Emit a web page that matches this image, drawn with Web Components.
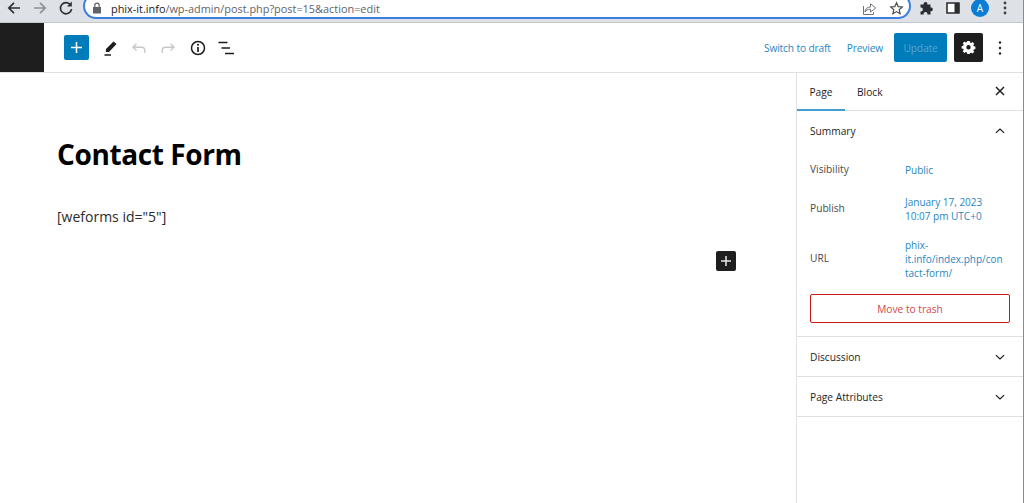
<!DOCTYPE html>
<html>
<head>
<meta charset="utf-8">
<title>Contact Form</title>
<style>
    html, body { margin: 0; height: 100%; background: #fff; overflow: hidden; }
    body { font-family: "Open Sans", "Noto Sans", sans-serif; color: #1e1e1e; display: flex; flex-direction: column; box-sizing: border-box; border-right: 1px solid #8c8c8c; }
</style>
</head>
<body>
<chrome-bar></chrome-bar>
<editor-toolbar></editor-toolbar>
<editor-layout>
    <editor-canvas></editor-canvas>
    <settings-sidebar slot="side">
        <panel-section title="Summary" open>
            <summary-row label="Visibility" style="--row-h:39px">Public</summary-row>
            <summary-row label="Publish" style="--row-h:39px">January 17, 2023<br>10:07 pm UTC+0</summary-row>
            <summary-row label="URL" style="--row-h:61px">phix-<br>it.info/index.php/con<br>tact-form/</summary-row>
            <trash-button>Move to trash</trash-button>
        </panel-section>
        <panel-section title="Discussion"></panel-section>
        <panel-section title="Page Attributes"></panel-section>
    </settings-sidebar>
</editor-layout>

<script>
    // Helper: every element has its markup in an open shadow root
    class Base extends HTMLElement {
        connectedCallback() {
            if (this.shadowRoot) return;
            this.attachShadow({ mode: 'open' }).innerHTML = this.markup();
        }
    }

    const chevronUp = '<svg width="18" height="18" viewBox="0 0 24 24" fill="none" stroke="#1e1e1e" stroke-width="1.7"><path d="M6.500 14.500 12 9.500l5.500 5"/></svg>';
    const chevronDown = '<svg width="18" height="18" viewBox="0 0 24 24" fill="none" stroke="#1e1e1e" stroke-width="1.7"><path d="M6.500 9.500 12 14.500l5.500-5"/></svg>';

    class ChromeBar extends Base {
        markup() {
            return `<style>
                :host { display: flex; flex: none; height: 22px; background: #dee1e6; border-bottom: 1px solid #c4c6ca; align-items: flex-start; overflow: hidden; }
                .nav { display: flex; gap: 8px; margin-top: -1px; padding-left: 5px; width: 83px; box-sizing: border-box; flex: none; }
                svg { display: block; flex: none; }
                .omni { flex: none; width: 828px; height: 26px; margin-top: -7px; box-sizing: border-box; background: #fff; border: 2px solid #3b7fe0; border-radius: 13px; display: flex; align-items: center; padding: 4px 5px 0 7px; font: 10.900px "Open Sans", sans-serif; color: #5f6368; }
                .omni b { font-weight: 400; color: #202124; }
                .url { margin-left: 9px; flex: 1; white-space: nowrap; }
                .ext { display: flex; align-items: center; margin-top: -1px; padding-left: 8px; }
                .avatar { width: 18px; height: 18px; border-radius: 50%; background: #0a7ed4; color: #fff; font: 10px/18px "Open Sans", sans-serif; text-align: center; margin-left: 11px; }
            </style>
            <div class="nav">
                <svg width="18" height="18" viewBox="0 0 18 18" fill="none" stroke="#303134" stroke-width="1.700"><path d="M15 9H4M9 3.800 3.800 9 9 14.200"/></svg>
                <svg width="18" height="18" viewBox="0 0 18 18" fill="none" stroke="#8d9095" stroke-width="1.700"><path d="M3 9h11M9 3.800 14.200 9 9 14.200"/></svg>
                <svg width="18" height="18" viewBox="0 0 18 18" fill="none" stroke="#303134" stroke-width="1.700"><path d="M13.800 6.200A5.600 5.600 0 1 0 14.600 10"/><path d="M14.800 2.600v4.800H10z" fill="#303134" stroke="none"/></svg>
            </div>
            <div class="omni">
                <svg width="10" height="12" viewBox="0 0 10 12"><path d="M1 5h8v6.500H1z" fill="#5f6368"/><path d="M2.800 5V3.400a2.200 2.200 0 0 1 4.400 0V5" fill="none" stroke="#5f6368" stroke-width="1.200"/></svg>
                <span class="url"><b>phix-it.info</b>/wp-admin/post.php?post=15&amp;action=edit</span>
                <svg width="15" height="15" viewBox="0 0 15 15" fill="none" stroke="#70747a" stroke-width="1"><path d="M8.500 6V2.800L13.800 7 8.500 11V8.200C5.500 8.200 4 9.300 3 11c0-2.800 2-5 5.500-5Z"/><path d="M1.500 5v8.500h10V11"/></svg>
                <svg width="15" height="15" viewBox="0 0 15 15" fill="none" stroke="#4a4d52" stroke-width="1.200" style="margin-left:12px"><path d="m7.500 1.800 1.700 3.800 4.100.4-3.100 2.700.9 4-3.600-2.100-3.600 2.100.9-4L1.700 6l4.100-.4z"/></svg>
            </div>
            <div class="ext">
                <svg width="16" height="16" viewBox="0 0 16 16" fill="#2b2d30"><path d="M1.500 4.500h3.200a1.900 1.900 0 1 1 3.600 0h3.200v3a1.900 1.900 0 1 1 0 3.700v3.300H8.300a1.900 1.900 0 1 0-3.600 0H1.500v-3.200a1.900 1.900 0 1 0 0-3.700z"/></svg>
                <svg width="14" height="14" viewBox="0 0 14 14" style="margin-left:11px"><path d="M1 2h12v10H1z" fill="#fff" stroke="#2b2d30" stroke-width="1.600"/><path d="M8.500 2H13v10H8.500z" fill="#2b2d30"/></svg>
                <div class="avatar">A</div>
                <svg width="16" height="16" viewBox="0 0 16 16" fill="#3c4043" style="margin-left:8px"><circle cx="8" cy="3" r="1.400"/><circle cx="8" cy="8" r="1.400"/><circle cx="8" cy="13" r="1.400"/></svg>
            </div>`;
        }
    }

    class EditorToolbar extends Base {
        markup() {
            return `<style>
                :host { display: flex; flex: none; height: 49px; border-bottom: 1px solid #e0e0e0; align-items: center; background: #fff; }
                .logo { width: 44px; height: 100%; background: #1e1e1e; flex: none; }
                .left { display: flex; align-items: center; padding-left: 20px; flex: 1; }
                .add { width: 25px; height: 25px; background: #007cba; border-radius: 2px; display: flex; align-items: center; justify-content: center; margin-right: 13px; }
                svg { display: block; flex: none; }
                .right { display: flex; align-items: center; font-size: 10.200px; letter-spacing: -.15px; color: #1f86c1; }
                .draft { margin-right: 16px; }
                .preview { margin-right: 11px; }
                .update { width: 53px; height: 29px; background: #007cba; color: #5aa5cf; border-radius: 2px; display: flex; align-items: center; justify-content: center; margin-right: 7px; }
                .gear { width: 29px; height: 29px; background: #1e1e1e; border-radius: 2px; display: flex; align-items: center; justify-content: center; margin-right: 15px; }
                .more { margin-right: 21px; }
            </style>
            <div class="logo"></div>
            <div class="left">
                <div class="add"><svg width="13" height="13" viewBox="0 0 13 13"><path d="M6.500 1v11M1 6.500h11" stroke="#fff" stroke-width="1.500"/></svg></div>
                <svg width="18" height="18" viewBox="0 0 18 18" style="margin-right:10px"><path d="m11.500 2.500 3 2.500-7.500 8H3.800l.2-3z" fill="#1e1e1e"/><path d="M2.500 16h6.500" stroke="#1e1e1e" stroke-width="1.500"/></svg>
                <svg width="18" height="18" viewBox="0 0 18 18" fill="none" stroke="#c8c8c8" stroke-width="1.400" style="margin-right:11px"><path d="M6.500 4.800 3 8.200l3.500 3.400M3 8.200h8.500a3.300 3.300 0 0 1 3.300 3.300V14"/></svg>
                <svg width="18" height="18" viewBox="0 0 18 18" fill="none" stroke="#c8c8c8" stroke-width="1.400" style="margin-right:12px"><path d="M11.500 4.800 15 8.200l-3.500 3.400M15 8.200H6.500a3.300 3.300 0 0 0-3.300 3.300V14"/></svg>
                <svg width="18" height="18" viewBox="0 0 18 18" style="margin-right:10px"><circle cx="9" cy="9" r="6.500" fill="none" stroke="#1e1e1e" stroke-width="1.500"/><path d="M9 8v5" stroke="#1e1e1e" stroke-width="1.700"/><circle cx="9" cy="5.800" r="1.050" fill="#1e1e1e"/></svg>
                <svg width="18" height="18" viewBox="0 0 18 18" stroke="#1e1e1e" stroke-width="1.500"><path d="M1.500 3.500h9M4.500 9H13M8 14.500h9"/></svg>
            </div>
            <div class="right">
                <span class="draft">Switch to draft</span>
                <span class="preview">Preview</span>
                <div class="update">Update</div>
                <div class="gear"><svg width="15" height="15" viewBox="0 0 24 24" fill="#fff"><path fill-rule="evenodd" d="M10 3h4l.5 2.600 1.700.7 2.200-1.500 2.800 2.800-1.500 2.200.7 1.700 2.600.5v4l-2.600.5-.7 1.700 1.500 2.200-2.800 2.800-2.200-1.500-1.700.7L14 24h-4l-.5-2.600-1.700-.7-2.200 1.500-2.800-2.800 1.500-2.200-.7-1.700L1 15v-4l2.600-.5.700-1.700-1.500-2.200 2.800-2.800 2.200 1.500 1.700-.7zM12 9.500a3.500 3.500 0 1 0 0 7 3.500 3.500 0 0 0 0-7z" transform="translate(0 -1.500)"/></svg></div>
                <svg class="more" width="4" height="16" viewBox="0 0 4 16" fill="#1e1e1e"><circle cx="2" cy="2.500" r="1.200"/><circle cx="2" cy="8" r="1.200"/><circle cx="2" cy="13.500" r="1.200"/></svg>
            </div>`;
        }
    }

    class EditorLayout extends Base {
        markup() {
            return `<style>
                :host { display: flex; flex: 1; min-height: 0; }
                .main { flex: 1; min-width: 0; }
                .side { flex: none; width: 227px; }
            </style>
            <div class="main"><slot></slot></div>
            <div class="side"><slot name="side"></slot></div>`;
        }
    }

    class EditorCanvas extends Base {
        markup() {
            return `<style>
                :host { display: block; padding: 63px 0 0 57px; position: relative; height: 100%; box-sizing: border-box; }
                h1 { margin: 0; font: 700 28px/36px "Open Sans", sans-serif; color: #000; letter-spacing: -.4px; }
                p { margin: 35px 0 0; font: 400 14px/20px "Open Sans", sans-serif; color: #2a2a2a; }
                .inserter { position: absolute; left: 716px; top: 178px; width: 20px; height: 20px; background: #1e1e1e; border-radius: 2px; display: flex; align-items: center; justify-content: center; }
                svg { display: block; }
            </style>
            <h1>Contact Form</h1>
            <p>[weforms id="5"]</p>
            <div class="inserter"><svg width="12" height="12" viewBox="0 0 12 12"><path d="M6 1v10M1 6h10" stroke="#e8e8e8" stroke-width="1.500"/></svg></div>`;
        }
    }

    class SettingsSidebar extends Base {
        markup() {
            return `<style>
                :host { display: block; height: 100%; box-sizing: border-box; border-left: 1px solid #e0e0e0; background: #fff; }
                .tabs { display: flex; align-items: stretch; height: 37px; border-bottom: 1px solid #e0e0e0; font-size: 10.200px; font-weight: 500; color: #1e1e1e; }
                .tab { display: flex; align-items: center; }
                .tab.on { width: 48px; box-sizing: border-box; justify-content: center; padding-top: 2px; margin-bottom: -1px; border-bottom: 2px solid #3f9fd0; }
                .tab.block { padding-left: 12px; }
                .close { margin-left: auto; margin-right: 14px; align-self: center; margin-top: -2px; }
                svg { display: block; }
            </style>
            <div class="tabs">
                <div class="tab on">Page</div>
                <div class="tab block">Block</div>
                <svg class="close" width="18" height="18" viewBox="0 0 18 18"><path d="m5 5 8 8M13 5l-8 8" stroke="#1e1e1e" stroke-width="1.500"/></svg>
            </div>
            <slot></slot>`;
        }
    }

    class PanelSection extends Base {
        markup() {
            const open = this.hasAttribute('open');
            return `<style>
                :host { display: block; border-bottom: 1px solid #e0e0e0; }
                header { display: flex; align-items: center; justify-content: space-between; height: 39px; padding: 0 14px 0 13px; font-size: 10.200px; font-weight: 500; color: #1e1e1e; }
                .body { padding: 0 13px 13px 13px; ${open ? '' : 'display:none;'} }
            </style>
            <header><span>${this.getAttribute('title')}</span>${open ? chevronUp : chevronDown}</header>
            <div class="body"><slot></slot></div>`;
        }
    }

    class SummaryRow extends Base {
        markup() {
            return `<style>
                :host { display: grid; grid-template-columns: 95px 1fr; align-items: center; min-height: var(--row-h); font-size: 10px; line-height: 14px; }
                .label { color: #4a4a4a; font-size: 10.200px; margin-bottom: 2px; }
                .value { color: #1f86c1; }
            </style>
            <div class="label">${this.getAttribute('label')}</div>
            <div class="value"><slot></slot></div>`;
        }
    }

    class TrashButton extends Base {
        markup() {
            return `<style>
                :host { display: flex; align-items: center; justify-content: center; height: 29px; box-sizing: border-box; margin-top: 5px; border: 1px solid #cc1818; border-radius: 2px; color: #d1484f; font-size: 10.200px; }
            </style>
            <slot></slot>`;
        }
    }

    customElements.define('chrome-bar', ChromeBar);
    customElements.define('editor-toolbar', EditorToolbar);
    customElements.define('editor-layout', EditorLayout);
    customElements.define('editor-canvas', EditorCanvas);
    customElements.define('settings-sidebar', SettingsSidebar);
    customElements.define('panel-section', PanelSection);
    customElements.define('summary-row', SummaryRow);
    customElements.define('trash-button', TrashButton);
</script>
</body>
</html>
